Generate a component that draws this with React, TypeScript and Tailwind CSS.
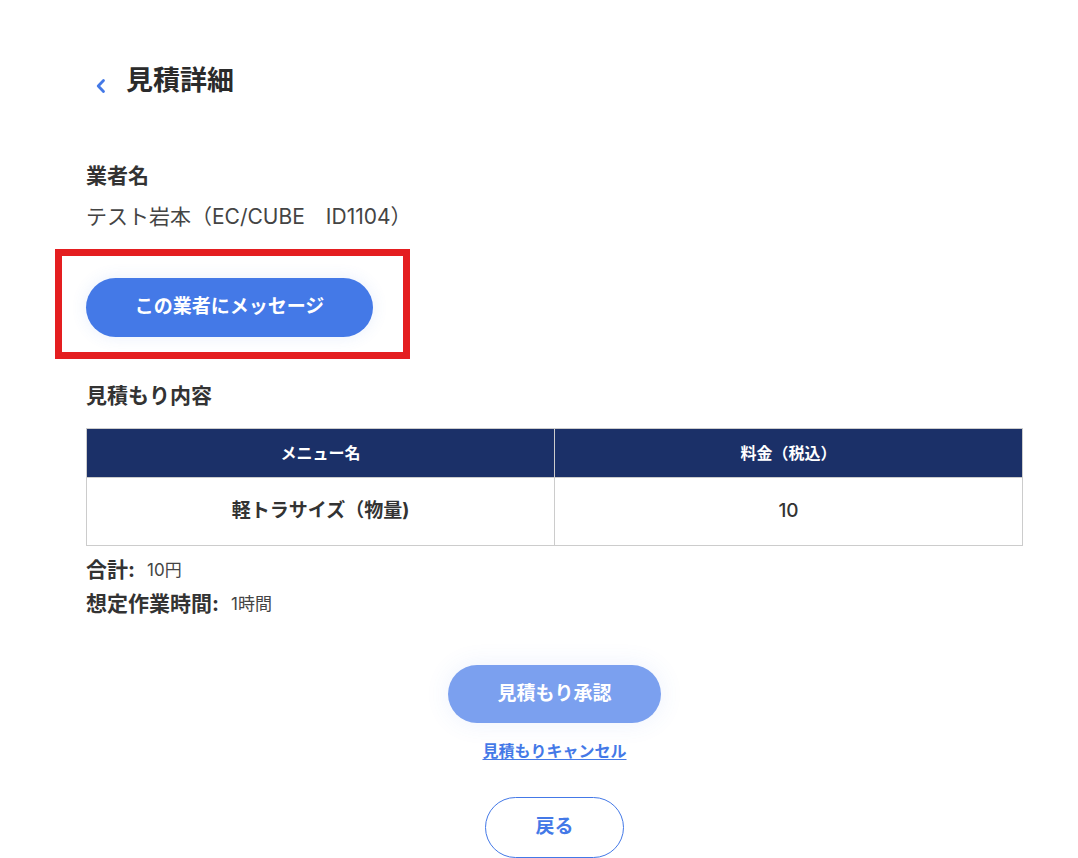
import React from "react";

export default function App() {
  const font = { fontFamily: 'Inter, "Noto Sans CJK JP", "Noto Sans", sans-serif' };
  return (
    <div className="min-h-[858px] w-[1078px] bg-white text-[#333333]" style={font}>
      <div className="ml-[86px] w-[937px] pt-[61px]">
        {/* Header */}
        <div className="flex h-[40px] items-center">
          <svg width="12" height="16" viewBox="0 0 12 16" className="ml-[9px] mt-[9px]">
            <path d="M8.5 2.5 L3.2 8 L8.5 13.5" fill="none" stroke="#4479e7" strokeWidth="2.8" strokeLinecap="round" strokeLinejoin="round" />
          </svg>
          <h1 className="ml-[19px] text-[27px] font-bold leading-[40px] text-[#2b2b2b]">見積詳細</h1>
        </div>

        {/* Vendor */}
        <div className="mt-[60px] text-[21px] font-bold leading-[30px]">業者名</div>
        <div className="mt-[11px] text-[21px] leading-[30px] text-[#444]">テスト岩本（EC/CUBE　ID1104）</div>

        <div className="relative mt-[46px] w-fit">
          <button className="flex h-[59px] w-[287px] items-center justify-center rounded-full bg-[#4479e7] text-[19px] font-bold text-white shadow-[0_0_16px_rgba(68,121,231,0.12)]">
            この業者にメッセージ
          </button>
          <div className="pointer-events-none absolute left-[-31px] top-[-29px] h-[110px] w-[355px] border-[7px] border-[#e41e20]" />
        </div>

        {/* Estimate */}
        <div className="mt-[44px] text-[21px] font-bold leading-[30px]">見積もり内容</div>
        <table className="mt-[17px] w-full border-collapse">
          <thead>
            <tr className="h-[49px] bg-[#1b3068]">
              <th className="w-1/2 border border-[#cccccc] text-[16px] font-bold text-white">メニュー名</th>
              <th className="w-1/2 border border-[#cccccc] text-[16px] font-bold text-white">料金（税込）</th>
            </tr>
          </thead>
          <tbody>
            <tr className="h-[68px]">
              <td className="border border-[#cccccc] text-center text-[19px] font-bold text-[#333]">軽トラサイズ（物量)</td>
              <td className="border border-[#cccccc] text-center text-[19px] font-medium text-[#333]">10</td>
            </tr>
          </tbody>
        </table>

        <div className="mt-[11px] flex items-center leading-[26px]">
          <span className="text-[21px] font-bold">合計:</span>
          <span className="ml-[12px] text-[17px] text-[#444]">10円</span>
        </div>
        <div className="mt-[8px] flex items-center leading-[26px]">
          <span className="text-[21px] font-bold">想定作業時間:</span>
          <span className="ml-[12px] text-[17px] text-[#444]">1時間</span>
        </div>

        {/* Actions */}
        <div className="flex flex-col items-center">
          <button className="mt-[48px] flex h-[58px] w-[213px] items-center justify-center rounded-full bg-[#7ba0ef] text-[19px] font-bold text-white shadow-[0_0_24px_rgba(68,121,231,0.1)]">
            見積もり承認
          </button>
          <a href="#" className="mt-[16px] text-[16px] font-bold leading-[24px] text-[#4479e7] underline underline-offset-2">
            見積もりキャンセル
          </a>
          <button className="mt-[34px] flex h-[61px] w-[139px] items-center justify-center rounded-full border border-[#4479e7] bg-white text-[19px] font-bold text-[#4479e7]">
            戻る
          </button>
        </div>
      </div>
    </div>
  );
}
